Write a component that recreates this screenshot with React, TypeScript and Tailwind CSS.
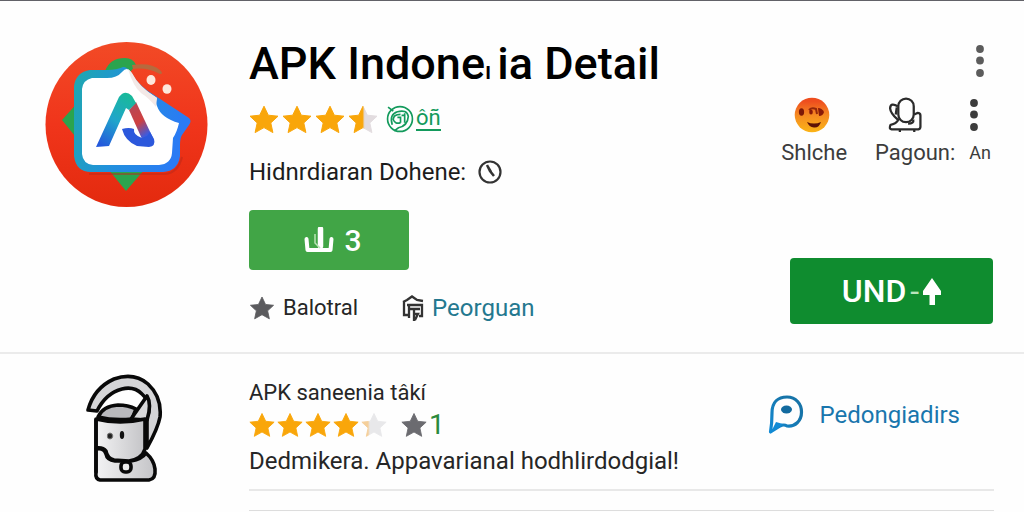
import React from 'react';

const STAR = 'M15 1.2 L19.3 10.2 L29 11.2 L21.8 17.900 L23.900 27.600 L15 22.600 L6.100 27.600 L8.200 17.900 L1 11.200 L10.700 10.200 Z';

function Star({ id, fill = 100, rest = '#e2dcdf', color = '#f9a60a', className }: { id: string; fill?: number; rest?: string; color?: string; className: string }) {
  return (
    <svg viewBox="0 0 30 29" className={className} aria-hidden="true">
      <defs>
        <linearGradient id={id}>
          <stop offset={`${fill}%`} stopColor={color} />
          <stop offset={`${Math.min(fill + 8, 100)}%`} stopColor={fill === 100 ? color : rest} />
        </linearGradient>
      </defs>
      <path d={STAR} fill={`url(#${id})`} stroke={`url(#${id})`} strokeWidth="1" strokeLinejoin="round" />
    </svg>
  );
}

function AppLogo() {
  return (
    <svg viewBox="0 0 163 167" className="h-[167px] w-[163px]" role="img" aria-label="APK Indonesia">
      <defs>
        <linearGradient id="disc" x1="0" y1="0" x2="0" y2="1">
          <stop offset="0" stopColor="#f24a26" />
          <stop offset="0.5" stopColor="#f0351b" />
          <stop offset="1" stopColor="#e32a0e" />
        </linearGradient>
        <linearGradient id="frame" x1="0" y1="0" x2="1" y2="0.25">
          <stop offset="0" stopColor="#1fa9ad" />
          <stop offset="0.5" stopColor="#2191dc" />
          <stop offset="1" stopColor="#2a7bf4" />
        </linearGradient>
        <linearGradient id="legLeft" x1="0.7" y1="0" x2="0.2" y2="1">
          <stop offset="0" stopColor="#19b99b" />
          <stop offset="0.5" stopColor="#20a5cb" />
          <stop offset="1" stopColor="#2459dc" />
        </linearGradient>
        <linearGradient id="legRight" x1="0" y1="0" x2="0.5" y2="1">
          <stop offset="0" stopColor="#b04a5c" />
          <stop offset="0.6" stopColor="#cf4040" />
          <stop offset="1" stopColor="#3f5bdc" />
        </linearGradient>
      </defs>
      <ellipse cx="81.500" cy="83.500" rx="81" ry="82.500" fill="url(#disc)" />
      <path d="M60 30 Q65 17 80 17 Q88 17 91 24 L76 42 H56Z" fill="#2ba44e" />
      <path d="M87 24 Q106 21 115 29 Q119 33 115 33 Q101 26 88 28Z" fill="#b66a3e" />
      <path d="M17 79 L34 60 V100Z" fill="#2ba44e" />
      <path d="M63 128 H100 L81 150Z" fill="#2ba44e" />
      <path d="M44 133 H120 Q133 132 137 116" fill="none" stroke="#b92818" strokeWidth="2" opacity="0.5" />
      <path d="M45 29 H62 Q72 29 78 26 Q82 25 87 33 Q93 43 103 50 L144 77 Q147 80 144 84 L137 94 Q135 97 135 104 V115 Q133 130 118 131 H46 Q31 131 29 115 V45 Q31 31 45 29Z" fill="url(#frame)" />
      <path d="M47 37 H62 Q72 37 77 31 Q82 25 86 31 Q93 45 103 51 L112 57 Q110 61 112 65 Q116 77 134 82 Q132 91 128 97 L127 112 Q126 123 114 124 H48 Q38 123 37 113 V48 Q38 39 47 37Z" fill="#fff" />
      <path d="M83 28 L87 32 Q94 46 112 57 L111 66 Q104 57 96 52 Q88 45 83 28Z" fill="#f3e9e7" />
      <ellipse cx="106" cy="39" rx="4.500" ry="5" fill="#fde8dc" />
      <ellipse cx="122" cy="48" rx="4.500" ry="4.800" fill="#fde8dc" />
      <path d="M84 69 L91 61 L108 97 L97 98Z" fill="url(#legRight)" />
      <path d="M77 88 Q84 86 89 88 Q88 94 97 97 L102 95 L105 91 L109 98 Q111 105 104 106 L92 105 Q80 100 77 88Z" fill="#2c58dc" />
      <path d="M51 106 L74 56 Q80 48 87 55 L91 62 L84 69 L81 67 L64 105Z" fill="url(#legLeft)" />
    </svg>
  );
}

function SignatureBadge() {
  return (
    <svg viewBox="0 0 27 27" className="h-7 w-7" fill="none" stroke="#139a5c" strokeWidth="1.600" aria-hidden="true">
      <circle cx="13.500" cy="13.500" r="12" />
      <path d="M2 2 L7 6 M6 19 Q3 9 11 6.500 Q20 4 21.500 11 Q21 20 12 22 L8 25 M14 9 Q7 9 7 14 Q9 19 14 17 M18 8 V17 M11 12 H14 V17 M15 10 H18" />
    </svg>
  );
}

function DownloadMark() {
  return (
    <svg viewBox="0 0 30 26" className="h-[26px] w-[30px]" fill="none" stroke="#fff" aria-hidden="true">
      <path d="M2.500 12 L3.500 23 H26.500 L27.500 12" strokeWidth="4" strokeLinejoin="round" strokeLinecap="round" />
      <path d="M16.500 2 V19" strokeWidth="5.500" strokeLinecap="round" />
      <path d="M11 7 V16 L16 21" strokeWidth="1.500" stroke="#b9e3b4" />
    </svg>
  );
}

function HouseMark() {
  return (
    <svg viewBox="0 0 22 27" className="h-[27px] w-[22px]" fill="none" stroke="#333" strokeWidth="2.300" aria-hidden="true">
      <path d="M1 7 L5 5 L10 1.500 L15 5 L21 6 M2 6 V20 H6 M5 10 H20 V21 H17 M7 14 H18 M7 10 V23 M12 14 V26 M12 19 H16 L13 25" />
    </svg>
  );
}

function Face() {
  return (
    <svg viewBox="0 0 36 36" className="h-9 w-9" aria-hidden="true">
      <defs>
        <linearGradient id="face" x1="0" y1="0" x2="0" y2="1">
          <stop offset="0.100" stopColor="#ee4d1e" />
          <stop offset="0.500" stopColor="#f58a22" />
          <stop offset="1" stopColor="#fbb416" />
        </linearGradient>
      </defs>
      <circle cx="18" cy="18" r="17.300" fill="url(#face)" />
      <ellipse cx="7.500" cy="15" rx="2.600" ry="3.800" fill="#7c1807" />
      <path d="M15 13 Q18 10 22 12 L23 17" fill="none" stroke="#93270b" strokeWidth="2" />
      <ellipse cx="17" cy="15" rx="1.800" ry="2.500" fill="#8a1a07" />
      <path d="M24 11 Q28 11 30 15 Q29 19 25 19Z" fill="#8a1a07" />
      <path d="M13 25 Q20 28 27 25 Q25 31 20 30.500 Q15 30 13 25Z" fill="#5e1206" />
    </svg>
  );
}

function Armchair() {
  return (
    <svg viewBox="0 0 34 35" className="h-9 w-9" fill="none" stroke="#2b2b2b" strokeWidth="2.200" strokeLinejoin="round" aria-hidden="true">
      <rect x="10.500" y="1.500" width="15" height="23" rx="7.500" />
      <path d="M10 9 Q3 5 2.500 11 Q3 16 10 22 M9 10 L8 17 M11 21 Q9 26 3 27 Q1 31 4 31.500 H30 Q32 31 32 29 V18 Q32 15.500 29 15.500 L26 17 M25 22 Q26 26 20 26 M12 32 V34 M26 32 V34" />
    </svg>
  );
}

function Dots({ className }: { className: string }) {
  return (
    <svg viewBox="0 0 8 32" className={className} fill="currentColor" aria-hidden="true">
      <circle cx="4" cy="4" r="3.900" />
      <circle cx="4" cy="15.500" r="3.900" />
      <circle cx="4" cy="28" r="3.900" />
    </svg>
  );
}

function CupMascot() {
  return (
    <svg viewBox="0 0 78 108" className="h-[108px] w-[78px]" stroke="#090909" strokeWidth="3.600" strokeLinejoin="round" strokeLinecap="round" role="img" aria-label="APK saneenia">
      <defs>
        <linearGradient id="cup">
          <stop offset="0" stopColor="#f3f3f4" />
          <stop offset="1" stopColor="#c4c4c7" />
        </linearGradient>
      </defs>
      <path d="M10 75 Q18 73 20 80 Q21 86 29 87 H45 Q56 85 60 79 Q68 86 69 95 Q70 105 63 106 H14 Q9 105 10 98Z" fill="url(#cup)" />
      <path d="M2 36 Q8 14 28 5 Q48 -2 62 10 Q76 23 74 43 Q72 54 61 74 V43 Q67 30 56 20 Q48 12 36 15 Q20 19 11 37Z" fill="#d5d5d7" />
      <path d="M12 43 Q17 32 32 31 Q42 31 50 35 L46 45 Q28 47 12 43Z" fill="#b9b9bd" />
      <path d="M45 45 L61 22 Q66 30 61 46Z" fill="#d9d9db" />
      <path d="M10 45 Q34 51 59 45 V75 Q56 85 43 87 L28 86 Q21 84 20 77 Q17 73 10 74Z" fill="url(#cup)" />
      <path d="M10 46 V98" fill="none" />
      <rect x="35" y="88" width="10" height="10" rx="4" fill="#eee" />
      <ellipse cx="24" cy="62" rx="2.700" ry="3" fill="#222" stroke="#777" strokeWidth="1" />
      <ellipse cx="36" cy="61" rx="2.200" ry="4" fill="#111" stroke="none" />
    </svg>
  );
}

function SpeechMark() {
  return (
    <svg viewBox="0 0 36 40" className="h-10 w-9" aria-hidden="true">
      <defs>
        <linearGradient id="speech" x1="1" y1="0" x2="0" y2="1">
          <stop offset="0.300" stopColor="#1774a9" />
          <stop offset="1" stopColor="#128bd5" />
        </linearGradient>
      </defs>
      <path d="M2.500 37 Q4 28 4 18 C4 7 10 2 19 2 C28 2 33.500 9 33.500 17 C33.500 26 27 32 19 31 Q16 29 12 31Z" fill="none" stroke="url(#speech)" strokeWidth="3.200" strokeLinejoin="round" />
      <path d="M3 37 L8 27 L15 29 L10 33Z" fill="#128bd5" />
      <ellipse cx="18.500" cy="14.500" rx="5.500" ry="4" fill="#126a9f" />
    </svg>
  );
}

export default function App() {
  return (
    <main className="min-h-screen border-t border-[#626268] bg-[#fefefe] font-['Roboto',sans-serif] text-[#262626]">
      <section className="flex items-start border-b-2 border-[#ebebeb] pb-7">
        <div className="w-[249px] shrink-0 pt-10 pl-[45px]">
          <AppLogo />
        </div>

        <div className="min-w-0 flex-1 pt-[39px]">
          <h1 className="text-[45px] leading-[48px] font-medium whitespace-nowrap text-black">
            APK Indone<span className="mr-1.5 text-2xl">ı</span>ia Detail
          </h1>
          <div className="mt-4 flex h-[30px] items-center">
            <div className="flex gap-[3px]" role="img" aria-label="3.5 of 5 stars">
              <Star id="a1" className="h-[29px] w-[30px]" />
              <Star id="a2" className="h-[29px] w-[30px]" />
              <Star id="a3" className="h-[29px] w-[30px]" />
              <Star id="a4" fill={48} className="h-[29px] w-[30px]" />
            </div>
            <a href="#reviews" className="ml-2 flex items-center gap-0.5 text-[#139a5c]">
              <SignatureBadge />
              <span className="border-b-2 border-current text-[22px] leading-[22px]">ôñ</span>
            </a>
          </div>
          <p className="mt-[22px] flex items-center gap-3 text-2xl leading-8 whitespace-nowrap text-[#1c1c1c]">
            Hidnrdiaran Dohene:
            <svg viewBox="0 0 24 24" className="h-6 w-6" fill="none" stroke="#333" strokeWidth="2.200" aria-hidden="true">
              <circle cx="12" cy="12" r="10.500" />
              <path d="M9 5 L12 11 L16 16 M10 7 L13 12" strokeWidth="2.500" />
            </svg>
          </p>
          <button type="button" className="mt-[22px] flex h-[60px] w-40 items-center justify-center gap-2.5 rounded bg-[#41a546] pl-2 text-[30px] font-medium text-white">
            <DownloadMark />3
          </button>
          <div className="mt-[22px] flex h-8 items-center text-2xl whitespace-nowrap">
            <Star id="b1" color="#5b5b5e" className="mr-2 h-6 w-[26px]" />
            <span className="text-[22px]">Balotral</span>
            <a href="#rules" className="ml-11 flex items-center gap-2 text-[#24788f]">
              <HouseMark />
              Peorguan
            </a>
          </div>
        </div>

        <div className="flex shrink-0 flex-col items-end pt-11 pr-[31px]">
          <button type="button" aria-label="More options" className="mr-[9px] text-[#5c5c5c]">
            <Dots className="h-8 w-2" />
          </button>
          <div className="mt-5 mr-0.5 flex text-[22px] leading-7 text-[#3c3c3c]">
            <button type="button" className="flex flex-col items-center gap-1.5">
              <span className="mr-1"><Face /></span>
              Shlche
            </button>
            <button type="button" className="ml-7 flex flex-col items-center gap-1.5">
              <span className="mr-5"><Armchair /></span>
              Pagoun:
            </button>
            <button type="button" className="ml-3.5 flex flex-col items-center gap-1.5 text-lg leading-7">
              <span className="mr-3 flex h-9 items-center"><Dots className="h-8 w-2" /></span>
              An
            </button>
          </div>
          <button type="button" className="mt-[91px] flex h-[66px] w-[203px] items-center justify-center rounded bg-[#0f8c2f] text-[32px] font-medium text-white">
            UND
            <span className="ml-1 font-normal text-[#b9e5bd]">-</span>
            <svg viewBox="0 0 18 27" className="ml-1 h-[27px] w-[18px]" fill="#fff" aria-hidden="true">
              <path d="M9 0 L18 13 V17 H12 V27 H6.500 V17 H0 V13Z" />
            </svg>
          </button>
        </div>
      </section>

      <section className="flex items-start">
        <div className="w-[249px] shrink-0 pt-5 pl-[86px]">
          <CupMascot />
        </div>
        <div className="min-w-0 flex-1 pr-[30px]">
          <div className="flex items-start justify-between border-b-2 border-[#e8e8e8] pt-[23px] pb-2">
            <div className="whitespace-nowrap">
              <h2 className="text-[22px] leading-8">APK saneenia tâkí</h2>
              <div className="flex h-8 items-center">
                <div className="flex gap-0.5" role="img" aria-label="4 of 5 stars">
                  <Star id="c1" className="h-[26px] w-[26px]" />
                  <Star id="c2" className="h-[26px] w-[26px]" />
                  <Star id="c3" className="h-[26px] w-[26px]" />
                  <Star id="c4" className="h-[26px] w-[26px]" />
                  <Star id="c5" fill={25} color="#f5cf9a" rest="#e8e8ea" className="h-[26px] w-[26px]" />
                </div>
                <Star id="c6" color="#6b6b70" className="ml-3.5 h-[26px] w-[26px]" />
                <span className="ml-0.5 text-[28px] text-[#2a8a3c]">1</span>
              </div>
              <p className="text-2xl leading-10">Dedmikera. Appavarianal hodhlirdodgial!</p>
            </div>
            <a href="#developer" className="mt-[18px] mr-[34px] flex items-center gap-4 text-2xl leading-10 text-[#1976ad]">
              <SpeechMark />
              Pedongiadirs
            </a>
          </div>
          <div className="mt-[19px] border-t border-[#dddddd]" />
        </div>
      </section>
    </main>
  );
}
